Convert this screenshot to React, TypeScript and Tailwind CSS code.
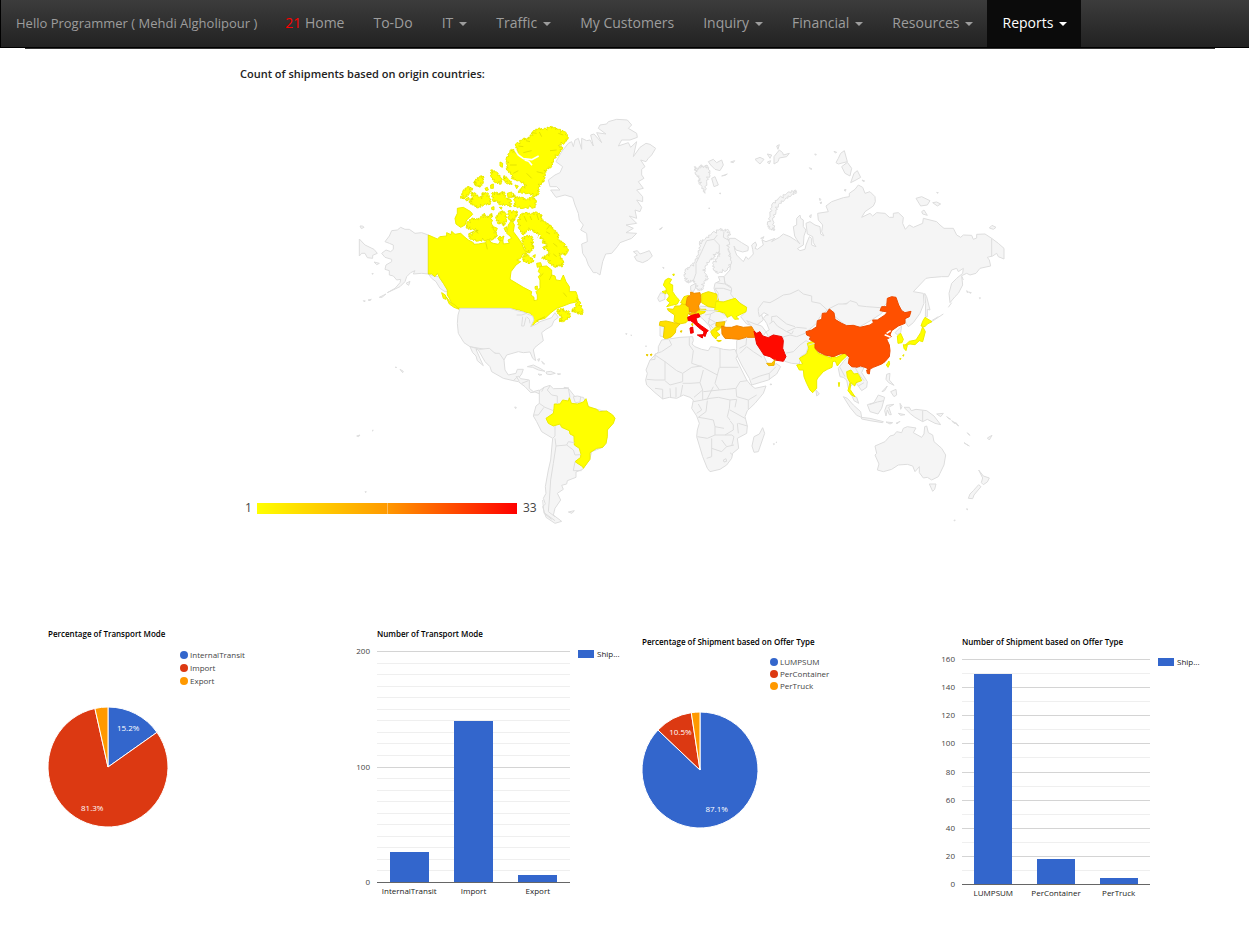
import clsx from 'clsx'

type Shape = { points: string; fill?: string; fjords?: boolean }
type Region = { x: number; y: number; shapes: Shape[]; borders?: string[]; water?: string[] }
type Slice = { label: string; value: number; color: string; text?: string }
type Bar = { label: string; value: number }

const YELLOW = '#ffff00'
const BLUE = '#3366cc'
const RED = '#dc3912'
const ORANGE = '#ff9900'

const menu = [
  { label: 'Home', badge: '21' },
  { label: 'To-Do' },
  { label: 'IT', dropdown: true },
  { label: 'Traffic', dropdown: true },
  { label: 'My Customers' },
  { label: 'Inquiry', dropdown: true },
  { label: 'Financial', dropdown: true },
  { label: 'Resources', dropdown: true },
  { label: 'Reports', dropdown: true, active: true },
]

// Outlines are stored at 3 units per pixel, relative to each region's origin
const regions: Region[] = [
  // Alaska and Canada
  {
    x: 350,
    y: 110,
    shapes: [
      { points: '235,375 215,368 195,370 178,358 165,358 152,352 142,360 125,362 118,378 105,395 118,400 130,405 130,418 122,425 108,420 95,430 105,442 125,448 125,455 108,465 105,478 118,482 118,495 130,498 140,510 152,508 150,518 135,535 112,548 150,530 165,515 170,500 182,488 195,482 190,492 215,490 235,492' },
      { points: '28,387 45,405 72,418 82,430 68,436 68,445 52,443 45,430 35,430 28,438' },
      { points: '30,348 38,348 42,352 34,356' },
      { points: '72,456 88,460 80,464' },
      { points: '88,562 108,552 96,562' },
      { points: '40,572 46,573 42,575' },
      { points: '54,570 64,568 60,572' },
      { points: '66,490 70,491 67,493' },
      { points: '168,520 180,514 176,526' },
      { points: '235,492 250,498 265,500 285,525 295,545 285,545 270,535 258,515 245,505' },
      { points: '235,375 262,387 270,380 290,378 290,368 303,374 305,364 315,373 332,370 345,382 355,390 370,398 372,403 385,402 408,398 408,388 418,385 422,397 430,400 445,403 450,395 443,385 450,378 458,388 460,402 478,400 474,390 485,385 480,378 470,370 475,345 485,330 493,345 490,365 505,385 515,400 522,418 530,430 518,432 512,445 500,450 512,455 498,465 483,485 480,508 500,520 520,532 545,545 543,555 552,562 552,572 562,570 562,555 558,545 570,533 570,510 565,500 572,492 565,485 570,470 590,468 605,480 605,495 615,498 618,510 632,512 640,495 648,515 658,530 658,545 678,545 683,560 683,575 660,580 640,588 620,595 603,608 585,625 565,630 555,640 542,650 545,640 550,628 542,610 520,605 508,600 480,595 330,595 322,592 305,580 298,565 292,555 292,540 280,520 270,505 262,490 255,500 245,492 235,492', fill: YELLOW },
      { points: '620,600 640,595 640,605 655,602 662,618 645,632 630,636 628,628 638,622 625,612', fill: YELLOW, fjords: true },
      { points: '666,600 678,590 680,562 688,573 697,597 699,612 686,612 680,606 668,605', fill: YELLOW, fjords: true },
      { points: '503,335 510,315 525,308 545,312 555,306 575,314 573,325 582,335 600,345 612,360 625,372 625,390 640,398 655,418 648,435 635,430 628,438 640,452 638,470 625,465 618,472 598,460 592,448 575,445 590,435 600,430 588,415 590,400 578,400 580,385 565,385 568,372 555,368 545,358 530,362 520,375 508,358', fill: YELLOW, fjords: true },
      { points: '515,385 528,378 545,378 550,395 545,405 552,410 540,428 528,425 520,405', fill: YELLOW, fjords: true },
      { points: '525,430 538,438 552,452 540,460 522,455 518,445', fill: YELLOW, fjords: true },
      { points: '560,460 572,458 575,468 562,472', fill: YELLOW },
      { points: '548,438 556,434 554,444', fill: YELLOW },
      { points: '578,412 586,408 584,420', fill: YELLOW },
      { points: '555,530 562,528 562,538 556,538', fill: YELLOW },
      { points: '350,340 365,325 378,328 390,325 402,310 408,322 418,318 425,310 426,345 432,358 442,375 430,388 410,390 385,393 362,388 355,375 375,365 385,360 365,358 350,355', fill: YELLOW, fjords: true },
      { points: '322,295 340,292 362,305 368,313 350,330 345,345 332,352 318,342 315,325 322,310', fill: YELLOW },
      { points: '445,312 455,303 466,308 470,330 462,348 455,338 445,342 437,325', fill: YELLOW, fjords: true },
      { points: '474,303 500,303 502,312 495,325 490,335 476,328', fill: YELLOW, fjords: true },
      { points: '430,350 442,355 438,365 430,360', fill: YELLOW },
      { points: '450,385 462,378 458,392 450,392', fill: YELLOW },
      { points: '462,355 470,350 468,366', fill: YELLOW },
      { points: '370,268 362,250 372,248 388,262 400,258 395,250 412,248 420,265 422,282 402,284 385,294 370,285 358,278 362,266', fill: YELLOW, fjords: true },
      { points: '332,265 338,245 352,230 368,235 358,250 345,265', fill: YELLOW, fjords: true },
      { points: '346,268 356,262 358,268 350,273', fill: YELLOW },
      { points: '375,212 388,200 400,198 400,215 392,230 380,228 372,220', fill: YELLOW, fjords: true },
      { points: '422,180 438,185 455,205 454,222 436,218 424,202', fill: YELLOW, fjords: true },
      { points: '460,198 475,203 487,222 474,222 462,212', fill: YELLOW, fjords: true },
      { points: '450,156 458,160 457,172 450,168', fill: YELLOW },
      { points: '422,225 430,222 430,235 422,235', fill: YELLOW },
      { points: '405,235 412,232 415,240 408,242', fill: YELLOW },
      { points: '425,292 432,290 432,300 425,298', fill: YELLOW },
      { points: '448,292 456,292 454,298', fill: YELLOW },
      { points: '425,250 440,246 445,255 452,248 462,245 468,265 482,268 484,290 468,284 450,285 440,272 430,275', fill: YELLOW, fjords: true },
      { points: '472,250 485,246 487,262 474,262', fill: YELLOW },
      { points: '488,250 498,262 515,262 530,270 545,260 558,270 556,292 520,295 492,290 495,275', fill: YELLOW, fjords: true },
      { points: '495,105 520,85 530,88 540,80 548,65 565,55 580,58 600,50 612,53 625,58 645,65 655,82 645,98 625,108 638,112 628,130 610,150 605,170 590,178 585,190 583,212 575,218 565,235 567,250 555,260 535,250 505,248 515,232 530,225 505,212 485,210 487,195 470,180 472,165 468,150 480,122 490,118 498,130 505,125', fill: YELLOW, fjords: true },
      { points: '495,225 505,228 500,236', fill: YELLOW },
      { points: '275,548 286,555 288,568 280,565', fill: YELLOW },
      { points: '288,560 302,578 315,585 328,598 312,592 298,582', fill: YELLOW },
    ],
    borders: ['560,70 545,68', '575,80 568,66', '640,75 625,70', '620,120 600,122', '580,190 560,185', '545,205 530,190', '520,110 505,108', '540,95 528,92', '545,122 520,128', '480,165 500,165', '490,190 505,182', '355,372 375,362 385,370', '408,400 412,418', '600,372 588,365', '610,400 622,410', '545,330 540,318', '530,335 522,318', '620,440 610,432', '570,640 560,632 585,620', '650,560 640,548', '600,345 590,358', '560,312 566,330', '570,500 580,490', '605,495 598,510'],
    water: ['494,118 505,135 520,146 545,149 566,138', '524,150 536,154 546,166', '463,188 480,208 500,216', '570,375 560,395 555,420 540,440'],
  },
  // Greenland, Iceland, Svalbard
  {
    x: 540,
    y: 110,
    shapes: [
      { points: '25,210 45,195 60,188 68,170 48,155 65,125 85,100 95,95 100,110 105,90 115,85 125,118 125,85 140,92 150,90 160,108 152,75 162,72 185,98 170,68 198,72 175,55 180,45 200,42 205,35 230,28 262,30 275,45 265,55 290,70 292,82 270,90 245,90 235,108 265,98 272,112 290,95 280,140 300,112 318,100 330,103 347,115 335,135 325,145 318,155 302,150 315,170 305,178 305,195 312,205 295,215 310,235 290,240 308,260 308,275 290,270 305,292 300,305 285,300 290,325 268,318 290,340 258,345 280,355 258,368 290,370 275,385 240,398 232,410 215,430 197,432 188,455 180,495 170,488 160,488 145,465 138,445 128,430 125,402 142,395 140,370 122,360 130,345 118,330 115,310 105,285 98,262 75,255 48,262 32,240 60,240 50,230 30,230' },
      { points: '280,425 292,422 300,432 312,428 328,422 337,438 325,450 308,458 290,452 283,440 292,435' },
      { points: '463,170 475,178 482,165 492,172 500,165 508,180 510,195 500,215 495,250 482,225 475,215 480,205 468,195', fjords: true },
      { points: '505,155 520,148 530,158 545,150 550,165 540,182 525,178 512,165' },
      { points: '515,205 525,200 535,225 522,230' },
      { points: '572,156 584,152 580,158' },
      { points: '545,198 562,192 556,196' },
      { points: '538,250 542,249 541,252' },
      { points: '358,358 367,352 363,358' },
      { points: '506,294 509,294 508,297' },
      { points: '368,472 372,473 371,476' },
    ],
  },
  // Russia and its islands
  {
    x: 750,
    y: 130,
    shapes: [
      { points: '-62,325 -45,325 -25,338 -5,350 -6,362 -22,366 -42,360 -48,348 -45,362 -40,375 -25,390 -20,395 -12,380 -5,388 10,372 8,358 5,345 16,336 20,345 15,355 22,358 40,345 36,330 48,335 75,325 65,335 88,322 100,312 120,320 140,333 150,342 140,328 134,318 130,290 140,285 140,265 150,255 152,265 160,270 160,290 168,300 162,318 160,345 142,356 150,362 165,358 168,345 178,320 185,325 185,345 198,350 190,338 188,320 172,312 168,280 180,275 195,285 210,290 212,312 222,318 215,305 218,285 205,270 203,250 235,245 228,228 245,215 280,203 298,200 298,190 315,178 325,165 338,172 345,190 360,185 375,200 376,215 370,228 345,245 335,262 360,250 368,258 380,248 405,250 418,262 430,262 430,250 445,248 460,262 458,280 466,298 478,285 490,292 518,280 520,265 560,275 570,285 582,295 610,295 620,315 632,322 640,315 665,316 670,328 680,324 680,313 705,312 725,325 745,340 762,355 762,387 745,380 740,370 728,378 712,382 718,390 722,408 690,415 678,430 660,435 650,430 635,437 638,465 625,490 615,500 600,518 597,490 605,460 620,445 638,430 640,415 625,425 620,415 605,420 595,440 575,440 540,443 528,445 490,485 520,490 522,520 510,550 490,578 475,590 468,580 460,545 430,515 415,515 390,540 340,535 300,517 265,527 235,540 205,555 100,520 40,530 35,555 40,570 15,590 -10,582 -28,560 -12,545 -10,532 -45,508 -68,495 -55,485 -58,470 -75,460 -78,440 -60,420 -58,400 -60,370 -68,350' },
      { points: '52,285 60,255 65,225 85,205 110,190 135,180 140,188 125,195 105,208 85,225 78,245 68,270 75,300 60,298', fjords: true },
      { points: '265,85 272,70 283,62 292,95 265,102 258,98' },
      { points: '275,110 292,97 305,115 300,138 285,130' },
      { points: '302,158 312,130 322,122 332,142 318,150' },
      { points: '498,205 515,200 540,212 532,225 512,228' },
      { points: '548,218 560,216 572,222 562,228' },
      { points: '515,245 522,240 532,256 518,252' },
      { points: '718,294 726,286 738,292 730,298' },
      { points: '15,88 30,82 42,88 30,102 22,95' },
      { points: '52,72 65,75 60,85' },
      { points: '72,80 88,60 98,68 100,75 118,70 110,80 88,84 84,95 72,102' },
      { points: '80,48 88,44 84,58' },
      { points: '52,96 62,92 58,102' },
      { points: '32,325 42,320 38,328' },
      { points: '178,113 186,117 182,118' },
      { points: '194,72 199,73 197,76' },
      { points: '252,64 260,67 256,69' },
      { points: '208,205 213,208 210,212' },
      { points: '210,218 215,216 213,222' },
      { points: '178,258 184,254 182,264' },
      { points: '336,150 344,153 340,155' },
      { points: '282,180 288,178 286,184' },
      { points: '560,187 565,188 562,190' },
      { points: '524,490 530,500 540,540 532,538 532,560 526,560 527,520' },
      { points: '650,482 655,486 652,488' },
      { points: '688,503 692,504 689,506' },
      { points: '656,486 664,488 660,490' },
      { points: '235,537 265,522 290,522 300,512 320,518 325,527 350,530 390,533 400,540 395,550 365,570 330,590 285,585 255,560' },
    ],
    borders: ['725,325 725,380', '545,575 580,552', '595,532 605,518', '640,450 636,440'],
  },
  // Europe, Middle East, central Asia
  {
    x: 640,
    y: 220,
    shapes: [
      { points: '138,185 133,170 135,150 150,140 165,125 175,100 180,75 178,65 195,58 215,40 240,26 250,32 262,28 272,42 262,50 268,65 265,92 275,125 262,150 235,160 222,152 218,130 232,112 240,100 228,98 222,115 210,120 195,142 195,160 205,175 192,185 190,205 180,212 170,207 165,190 158,180 148,188', fjords: true },
      { points: '152,212 152,198 168,190 166,205 160,215' },
      { points: '225,190 240,182 235,170 252,170 255,192 275,205 272,222 285,238 265,245 235,244 228,222 222,205' },
      { points: '175,258 205,260 232,264 240,275 262,290 258,305 228,308 228,322 215,335 208,318 192,300 180,290 190,275' },
      { points: '60,318 72,320 70,350 60,348' },
      { points: '62,218 75,222 75,238 58,245 53,235' },
      { points: '355,265 370,245 390,248 405,240 430,225 450,222 475,210 490,222 515,228 515,245 540,250 562,270 540,290 530,310 500,335 525,365 505,380 498,400 482,410 478,432 455,430 434,424 428,385 430,350 400,345 385,350 378,335 388,330 380,310 370,295 378,285 385,285 372,278 358,290 355,275' },
      { points: '320,302 345,312 365,318 378,335 370,348 342,336 335,320' },
      { points: '290,362 300,355 345,350 352,375 368,400 382,430 402,437 408,430 422,440 410,462 385,480 335,495 328,475 305,435 288,400 290,385' },
      { points: '85,175 95,178 88,190 98,195 98,215 108,230 118,240 112,252 95,256 80,260 90,248 80,240 88,228 80,216 78,205 70,195 76,180', fill: YELLOW },
      { points: '66,215 78,212 78,222', fill: YELLOW },
      { points: '98,163 103,162 101,168', fill: YELLOW },
      { points: '82,266 100,268 105,258 118,258 130,250 146,262 150,275 142,285 145,300 138,308 118,312 102,305 104,285 85,272', fill: '#fff000' },
      { points: '60,305 78,303 100,308 120,312 108,325 106,338 95,350 78,358 70,352 74,320 58,316', fill: '#ffe000' },
      { points: '122,248 132,230 146,226 144,252 132,254', fill: '#fff000' },
      { points: '152,225 152,216 163,220 180,218 184,242 175,258 180,274 162,278 148,275 148,262 138,255 142,232', fill: ORANGE },
      { points: '185,222 205,215 230,222 235,240 230,264 205,260 185,248', fill: '#fff200' },
      { points: '168,278 182,268 198,268 194,278 178,284', fill: '#fff000' },
      { points: '146,282 158,277 170,282 158,288', fill: '#ffc400' },
      { points: '143,292 155,286 176,281 180,290 168,295 172,308 185,318 205,332 200,336 195,350 190,345 192,335 175,322 160,308 152,302 145,302', fill: '#ff0000' },
      { points: '172,345 190,344 187,354', fill: '#ff0000' },
      { points: '150,324 158,321 160,338 152,340', fill: '#ff0000' },
      { points: '154,312 158,310 158,318', fill: '#fff000' },
      { points: '228,244 250,246 275,238 286,235 300,250 320,262 318,275 298,285 288,290 296,297 284,298 274,286 262,292 255,280 240,275 224,272', fill: '#ffff00' },
      { points: '228,308 255,305 252,318 238,322 228,318', fill: '#ffd000' },
      { points: '212,335 226,322 244,321 236,330 228,332 240,345 230,350 228,357 218,348', fill: '#fff000' },
      { points: '230,361 244,362 236,365', fill: '#fff000' },
      { points: '120,334 126,332 124,337', fill: '#ffe000' },
      { points: '18,404 24,404 22,408', fill: '#ffe000' },
      { points: '30,404 36,402 34,407', fill: '#ffe000' },
      { points: '245,318 258,322 275,322 290,317 310,322 335,320 342,332 346,352 318,352 298,358 275,356 255,355 246,342', fill: '#ff9000' },
      { points: '342,333 350,340 360,335 368,348 385,353 400,345 425,350 430,362 428,385 438,410 430,424 405,420 390,410 372,405 362,390 350,372 346,352', fill: '#ff0a00' },
      { points: '380,430 395,430 405,419 402,436 386,437', fill: '#ffc400' },
      { points: '390,492 396,493 392,495' },
    ],
    borders: [
      '160,182 168,160 168,130 185,95 200,62 222,58 232,45',
      '222,58 238,75 238,98',
      '252,34 250,52 268,62',
      '228,188 254,192',
      '225,205 250,205 272,212',
      '180,270 205,272 235,272',
      '195,285 212,282 225,275',
      '205,295 228,308 208,318',
      '225,205 235,220 232,240',
      '212,282 205,310 220,325',
      '388,312 400,303 412,318 440,335 455,342 460,332',
      '432,350 450,345 470,350 500,338',
      '435,400 460,395 480,375 498,362 510,368',
      '440,335 470,322 500,325',
      '395,305 395,290 410,288 440,312 465,320',
      '320,352 318,375 298,385',
      '300,400 320,380 340,395 366,412',
      '335,478 360,468 388,460 408,440',
      '388,460 388,480',
    ],
    water: ['262,296 250,300'],
  },
  // South and east Asia, Oceania
  {
    x: 790,
    y: 280,
    shapes: [
      { points: '145,265 160,245 172,232 185,255 205,262 222,262 215,278 232,305 230,322 215,332 205,318 195,305 182,320 175,325 170,300 160,292 150,290' },
      { points: '185,345 200,352 206,370 192,362' },
      { points: '160,350 172,355 190,375 212,395 215,412 200,406 180,382' },
      { points: '213,412 240,415 280,425 278,428 240,422 215,417' },
      { points: '232,374 252,368 265,345 284,352 275,385 264,402 240,395' },
      { points: '290,376 312,373 296,382 304,404 298,404 292,390 288,408 284,392' },
      { points: '342,382 358,382 364,392 378,388 410,392 432,408 452,434 435,430 412,418 398,425 375,412 362,402' },
      { points: '440,402 460,400 452,410' },
      { points: '290,283 300,280 298,300 312,316 296,308 288,298' },
      { points: '302,335 318,328 320,345 312,350' },
      { points: '276,335 292,318 284,332' },
      { points: '288,426 308,428 300,432' },
      { points: '318,430 330,424 324,430' },
      { points: '330,370 336,380 332,388' },
      { points: '325,400 345,404 332,406' },
      { points: '470,410 482,418 476,416' },
      { points: '485,422 498,430 492,430' },
      { points: '498,428 506,438 500,434' },
      { points: '522,488 538,498 530,494' },
      { points: '532,458 540,466 536,464' },
      { points: '592,474 606,466 598,480' },
      { points: '530,686 534,688 531,690' },
      { points: '492,720 496,721 493,723' },
      { points: '315,158 335,138 332,158 322,164' },
      { points: '78,330 88,342 80,348' },
      { points: '80,215 92,215 125,228 122,235 98,228' },
      { points: '255,498 285,485 300,468 312,465 320,455 335,458 340,445 352,440 378,444 370,458 395,472 402,462 404,440 410,438 415,458 428,465 432,485 455,505 467,525 462,555 450,580 445,590 425,600 412,592 400,594 388,578 388,560 375,575 368,558 352,553 325,555 305,568 280,575 262,570 267,552 255,525 260,520' },
      { points: '418,612 438,612 434,628 428,634' },
      { points: '566,570 580,588 598,594 592,606 580,614 574,608 578,594' },
      { points: '566,614 573,620 552,645 548,656 535,655 540,642 550,632' },
      { points: '52,190 74,182 75,205 85,220 125,235 124,228 140,232 165,220 170,228 152,245 142,258 136,243 128,245 126,262 112,268 100,275 85,292 80,300 80,325 68,338 60,330 50,310 42,290 40,270 28,270 20,255 38,252 28,235 50,222 56,205', fill: '#ffff00' },
      { points: '48,155 65,150 80,140 82,122 95,118 97,100 110,99 118,87 132,98 135,118 155,130 170,137 190,136 210,142 240,135 250,128 248,120 262,120 285,105 292,96 270,92 275,80 290,80 292,55 305,50 318,52 326,75 335,92 345,98 363,94 358,110 345,116 345,130 325,138 305,152 300,165 304,170 290,178 298,195 300,212 298,230 285,245 275,252 250,262 238,268 225,262 212,258 200,262 185,260 175,250 178,232 165,220 150,222 130,230 105,225 85,215 75,205 75,188 58,178 62,170 50,165', fill: '#ff5000' },
      { points: '230,270 240,267 238,282 232,280', fill: '#ff5000' },
      { points: '170,275 183,270 192,282 205,280 215,302 198,308 194,318 183,308 180,328 195,350 184,345 174,332 180,308 172,292', fill: YELLOW },
      { points: '145,308 149,308 147,320', fill: YELLOW },
      { points: '405,112 426,125 412,132 405,140 393,138 398,124', fill: YELLOW },
      { points: '398,140 406,155 398,185 388,182 375,194 360,192 345,196 358,184 378,180 392,158', fill: YELLOW },
      { points: '340,194 352,196 348,212 342,205', fill: YELLOW },
      { points: '322,168 332,160 340,178 336,188 324,190', fill: YELLOW },
      { points: '297,243 299,252 294,262 289,255', fill: YELLOW },
      { points: '329,236 333,235 331,239', fill: YELLOW },
      { points: '338,226 342,224 340,229', fill: YELLOW },
    ],
    borders: ['398,392 398,425', '195,262 205,280 222,302', '205,318 222,308', '150,262 165,290', '425,122 445,110', '55,195 74,190', '238,374 262,366 282,362'],
    water: ['302,152 290,160', '284,164 302,172'],
  },
  // Americas south of Canada
  {
    x: 240,
    y: 300,
    shapes: [
      { points: '660,25 810,25 832,32 850,36 862,42 878,48 882,60 872,80 890,72 900,65 935,53 945,38 955,52 942,62 935,78 918,88 905,98 910,122 885,142 880,150 887,182 878,175 870,156 850,158 835,155 800,165 792,180 772,162 755,155 735,148 690,140 672,128 655,100 652,70 654,45' },
      { points: '690,140 720,148 748,145 765,160 778,160 792,180 795,210 805,225 828,220 832,208 850,208 845,222 835,235 820,242 790,235 755,215 750,200 735,185 715,150 708,148 720,175 730,197 712,182 708,168 698,158' },
      { points: '820,242 835,228 842,236 868,240 868,265 880,275 898,270 900,282 885,276 872,278 855,260 835,245' },
      { points: '862,200 880,195 900,205 915,214 895,210 878,202' },
      { points: '918,216 932,214 946,220 930,224 920,222' },
      { points: '894,222 906,224 898,226' },
      { points: '952,221 962,222 954,224' },
      { points: '893,178 899,176 896,184' },
      { points: '905,184 914,192 910,192' },
      { points: '972,262 986,264 976,267' },
      { points: '898,272 912,262 930,256 940,266 985,265 1005,290 1030,292 1045,320 1070,328 1100,335 1125,355 1102,390 1098,430 1088,442 1055,455 1050,475 1028,508 1008,516 1008,532 982,542 980,552 965,556 970,568 952,580 962,600 945,625 940,645 965,664 945,670 918,652 908,620 916,612 910,595 918,580 916,560 925,510 932,480 938,415 905,395 890,365 880,348 888,318 898,310' },
      { points: '985,636 1003,632 996,640' },
      { points: '480,208 490,214 488,218' },
      { points: '466,201 470,202 468,204' },
      { points: '350,408 360,405 356,410' },
      { points: '396,391 400,391 398,393' },
      { points: '824,321 829,322 827,326' },
      { points: '375,575 379,575 377,578' },
      { points: '1157,101 1161,101 1159,104' },
      { points: '1172,105 1176,106 1174,107' },
      { points: '1000,290 1012,288 1022,290 1020,306 1006,308' },
      { points: '943,312 960,312 968,300 985,303 988,293 994,310 1012,312 1030,306 1038,296 1045,320 1070,328 1078,335 1100,333 1118,345 1125,355 1120,370 1102,390 1102,410 1098,430 1088,442 1070,445 1050,458 1050,478 1030,505 1028,500 1005,485 1022,472 1022,460 1018,445 1003,435 1002,408 990,402 988,392 965,382 960,372 940,378 925,370 918,355 940,340 942,325', fill: YELLOW },
    ],
    borders: [
      '898,310 915,322 940,332', '882,345 895,345 912,322', '945,378 945,408 938,415', '945,415 948,438 980,435 985,425 1003,428',
      '980,435 1000,450 1005,465 1022,464', '948,438 940,490 932,540 928,600 925,635 945,650', '1005,485 1000,512 1025,512',
      '930,258 922,270 935,285 952,288 952,312', '985,265 990,292', '830,45 845,45 860,40', '848,50 845,78 852,78 858,52', '860,50 868,58 870,70', '915,640 945,662', '908,600 912,640 935,658', '912,262 905,275',
      '845,250 865,242', '828,228 838,244',
    ],
  },
  // Africa
  {
    x: 630,
    y: 320,
    shapes: [
      { points: '95,60 110,58 150,52 188,50 190,62 186,72 195,80 215,88 235,92 242,80 258,82 280,88 300,90 315,88 322,105 318,115 335,150 350,180 362,195 375,205 408,198 400,220 375,250 352,272 345,290 352,318 350,340 322,355 326,385 308,400 305,415 290,435 270,448 240,455 232,445 218,410 200,350 202,330 208,310 200,288 185,265 190,240 180,232 160,225 140,235 118,232 98,237 75,218 50,195 47,180 52,160 48,150 60,120 85,95 85,80' },
      { points: '398,323 404,340 385,395 372,397 366,378 372,350 388,342' },
      { points: '46,78 50,78 48,80' },
      { points: '430,371 434,372 431,374' },
      { points: '438,366 441,367 439,368' },
    ],
    borders: [
      '118,60 125,75 95,95 75,102', '75,102 75,118 60,120', '75,105 105,125 140,152 158,160', '178,52 178,75 190,92', '190,92 185,130 215,140', '270,84 270,142 325,142',
      '215,140 262,165 268,142', '158,160 185,142 215,138', '105,125 105,180 75,180 50,178', '158,160 158,185 120,195 105,182', '158,190 180,190 210,188 220,150', '262,165 255,190 268,210 220,215',
      '98,237 98,208 75,205', '122,232 120,205', '138,232 138,202', '152,228 158,195', '210,188 218,210 218,240 190,245', '218,210 192,232', '218,240 240,235 265,232 300,240',
      '268,210 290,208 318,205 330,185 352,182', '318,205 320,230 355,240 380,225', '355,240 355,268', '300,240 298,265 292,290 300,300', '300,270 345,295', '300,240 320,238 315,262', '232,242 228,275 205,292',
      '205,292 225,295 250,300 255,320 282,325', '255,320 255,345 232,355 202,350', '255,345 285,345 310,330 310,315 300,302', '245,355 245,410 230,415', '245,385 275,395 290,380 312,375',
      '275,360 290,380', '285,345 305,345 312,350 305,378', '308,405 300,398', '325,310 352,318', '205,252 215,270 200,280', '280,420 288,416 290,424 282,426 280,420', '322,310 325,340', '230,240 250,200',
    ],
  },
]

// Cuts a small notch in and out of every edge, for coasts with many inlets
function notch(points: string) {
  const pts = points.split(' ').map((p) => p.split(',').map(Number))
  return pts
    .flatMap(([x, y], i) => {
      const [nx, ny] = pts[(i + 1) % pts.length]
      const length = Math.hypot(nx - x, ny - y)
      const px = -(ny - y) / length
      const py = (nx - x) / length
      const depth = i % 3 === 0 ? 7 : 4
      const at = (t: number, d: number) =>
        `${(x + (nx - x) * t + px * d).toFixed(1)},${(y + (ny - y) * t + py * d).toFixed(1)}`
      return [`${x},${y}`, at(0.3, -2), at(0.45, depth), at(0.6, -2), at(0.8, 2)]
    })
    .join(' ')
}

function WorldMap() {
  return (
    <svg viewBox="240 110 780 420" className="mt-7 block w-[780px] max-w-full" role="img" aria-label="Shipments by origin country">
      <defs>
        <linearGradient id="scale">
          <stop offset="0" stopColor="#ffff00" />
          <stop offset="0.5" stopColor="#ff9900" />
          <stop offset="1" stopColor="#ff0000" />
        </linearGradient>
      </defs>
      {regions.map((region, i) => (
        <g
          key={i}
          transform={`translate(${region.x} ${region.y}) scale(0.33333)`}
          strokeWidth={3}
          strokeLinejoin="round"
        >
          {region.shapes
            .filter((s) => !s.fill)
            .map((s) => (
              <polygon key={s.points} points={s.fjords ? notch(s.points) : s.points} fill="#f5f5f5" stroke="#dddddd" />
            ))}
          {region.shapes
            .filter((s) => s.fill)
            .map((s) => {
              const outline = s.fjords ? notch(s.points) : s.points
              return (
                <g key={s.points}>
                  <polygon points={outline} fill={s.fill} stroke={s.fill} />
                  <polygon points={outline} fill="none" stroke="#000000" strokeOpacity={0.08} />
                </g>
              )
            })}
          {region.borders?.map((b) => (
            <polyline key={b} points={b} fill="none" stroke={i === 0 ? '#e3e300' : '#dddddd'} />
          ))}
          {region.water?.map((w) => (
            <polyline key={w} points={w} fill="none" stroke="#ffffff" strokeWidth={5} />
          ))}
        </g>
      ))}
      <rect x="257" y="503" width="260" height="11" fill="url(#scale)" />
      <rect x="387" y="503" width="1" height="11" fill="#ffffff" fillOpacity="0.35" />
      <g className="fill-[#444444] font-['Open_Sans',sans-serif] text-[12px]">
        <text x="245" y="512">1</text>
        <text x="523" y="512">33</text>
      </g>
    </svg>
  )
}

function PieChart({
  title,
  slices,
  radius,
  legend,
  className,
}: {
  title: string
  slices: Slice[]
  radius: number
  legend: string
  className?: string
}) {
  const size = radius * 2
  const total = slices.reduce((sum, s) => sum + s.value, 0)
  const point = (share: number, r: number) => {
    const a = share * 2 * Math.PI
    return [radius + r * Math.sin(a), radius - r * Math.cos(a)]
  }
  let start = 0

  return (
    <figure className={className}>
      <h3 className="text-[8px] leading-3 font-semibold whitespace-nowrap text-black">{title}</h3>
      <ul className={clsx('mt-2 text-[8px] text-[#444444]', legend)}>
        {slices.map((s) => (
          <li key={s.label} className="flex items-center gap-[2px]">
            <span className="size-2 rounded-full" style={{ backgroundColor: s.color }} />
            {s.label}
          </li>
        ))}
      </ul>
      <svg width={size} height={size} className="mt-5 block overflow-visible" role="img" aria-label={title}>
        {slices.map((s) => {
          const from = start
          const to = start + s.value / total
          start = to
          const [x1, y1] = point(from, radius)
          const [x2, y2] = point(to, radius)
          const [tx, ty] = point((from + to) / 2, radius * 0.73)
          return (
            <g key={s.label}>
              <path
                d={`M${radius} ${radius}L${x1} ${y1}A${radius} ${radius} 0 ${to - from > 0.5 ? 1 : 0} 1 ${x2} ${y2}Z`}
                fill={s.color}
                stroke="#ffffff"
                strokeWidth="1"
              />
              {s.text && (
                <text x={tx} y={ty + 3} textAnchor="middle" className="fill-white text-[8px]">
                  {s.text}
                </text>
              )}
            </g>
          )
        })}
      </svg>
    </figure>
  )
}

function BarChart({
  title,
  bars,
  max,
  step,
  gutter,
  width,
  height,
  className,
}: {
  title: string
  bars: Bar[]
  max: number
  step: number
  gutter: number
  width: number
  height: number
  className?: string
}) {
  const top = 5
  const y = (value: number) => Math.round(top + height - (value / max) * height)
  const ticks = Array.from({ length: max / 10 + 1 }, (_, i) => i * 10)
  const slot = width / bars.length
  const barWidth = Math.round(slot * 0.61)

  return (
    <figure className={className}>
      <h3 className="text-[8px] leading-3 font-semibold whitespace-nowrap text-black" style={{ marginLeft: gutter }}>
        {title}
      </h3>
      <div className="mt-[6px] flex items-start gap-2">
        <svg width={gutter + width} height={height + 22} className="shrink-0 text-[8px]" role="img" aria-label={title}>
          {ticks.map((t) => (
            <rect key={t} x={gutter} y={y(t)} width={width} height="1" fill={t % step ? '#efefef' : '#d4d4d4'} />
          ))}
          {ticks
            .filter((t) => t % step === 0)
            .map((t) => (
              <text key={t} x={gutter - 7} y={y(t) + 3} textAnchor="end" fill="#444444">
                {t}
              </text>
            ))}
          {bars.map((b, i) => (
            <g key={b.label}>
              <rect
                x={Math.round(gutter + slot * (i + 0.5) - barWidth / 2)}
                y={y(b.value)}
                width={barWidth}
                height={y(0) - y(b.value)}
                fill={BLUE}
              />
              <text x={gutter + slot * (i + 0.5)} y={y(0) + 12} textAnchor="middle" fill="#222222">
                {b.label}
              </text>
            </g>
          ))}
          <rect x={gutter} y={y(0)} width={width} height="1" fill="#666666" />
        </svg>
        <div className="mt-[2px] flex items-center gap-[3px] text-[8px] leading-3 text-[#222222]">
          <span className="h-2 w-4 bg-[#3366cc]" />
          Ship...
        </div>
      </div>
    </figure>
  )
}

function Navbar() {
  return (
    <header>
      <nav className="mr-px flex h-12 items-center border-b border-l border-black bg-linear-to-b from-[#3c3c3c] to-[#222222] text-[14px] text-[#9d9d9d]">
        <span className="pr-[13px] pl-[15px] text-[13px] whitespace-nowrap">Hello Programmer ( Mehdi Algholipour )</span>
        <ul className="flex h-full">
          {menu.map((item) => {
            const style = clsx(
              'flex h-full items-center gap-[6px] pr-[14px] pl-[15px] pb-[2px] whitespace-nowrap',
              item.active && 'bg-[#0b0b0b] text-white',
            )
            return (
              <li key={item.label}>
                {item.dropdown ? (
                  <button type="button" className={style}>
                    {item.label}
                    <span className="mt-[2px] border-x-4 border-t-4 border-x-transparent border-t-current" />
                  </button>
                ) : (
                  <a href="#" className={style}>
                    <span>
                      {item.badge && <span className="text-[#ff0000]">{item.badge} </span>}
                      {item.label}
                    </span>
                  </a>
                )}
              </li>
            )
          })}
        </ul>
      </nav>
      <div className="mr-[35px] ml-[25px] h-px bg-[#333333]" />
    </header>
  )
}

export default function App() {
  return (
    <div className="min-h-screen overflow-x-hidden bg-white font-['Open_Sans',sans-serif]">
      <Navbar />
      <main>
        <section className="pt-[17px] pl-[240px]">
          <h2 className="text-[11px] leading-4 font-semibold text-[#222222]">Count of shipments based on origin countries:</h2>
          <WorldMap />
        </section>
        <section className="mt-[98px] grid grid-cols-[302fr_292fr_298fr_310fr] pl-12">
          <PieChart
            title="Percentage of Transport Mode"
            radius={60}
            legend="ml-[132px] leading-[13px]"
            slices={[
              { label: 'InternalTransit', value: 15.2, color: BLUE, text: '15.2%' },
              { label: 'Import', value: 81.3, color: RED, text: '81.3%' },
              { label: 'Export', value: 3.5, color: ORANGE },
            ]}
          />
          <BarChart
            title="Number of Transport Mode"
            max={200}
            step={100}
            gutter={27}
            width={193}
            height={231}
            bars={[
              { label: 'InternalTransit', value: 26 },
              { label: 'Import', value: 139 },
              { label: 'Export', value: 6 },
            ]}
          />
          <PieChart
            className="pt-2"
            title="Percentage of Shipment based on Offer Type"
            radius={58}
            legend="ml-[128px] leading-3"
            slices={[
              { label: 'LUMPSUM', value: 87.1, color: BLUE, text: '87.1%' },
              { label: 'PerContainer', value: 10.5, color: RED, text: '10.5%' },
              { label: 'PerTruck', value: 2.4, color: ORANGE },
            ]}
          />
          <BarChart
            className="pt-2"
            title="Number of Shipment based on Offer Type"
            max={160}
            step={20}
            gutter={22}
            width={188}
            height={225}
            bars={[
              { label: 'LUMPSUM', value: 149 },
              { label: 'PerContainer', value: 18 },
              { label: 'PerTruck', value: 4 },
            ]}
          />
        </section>
      </main>
    </div>
  )
}
